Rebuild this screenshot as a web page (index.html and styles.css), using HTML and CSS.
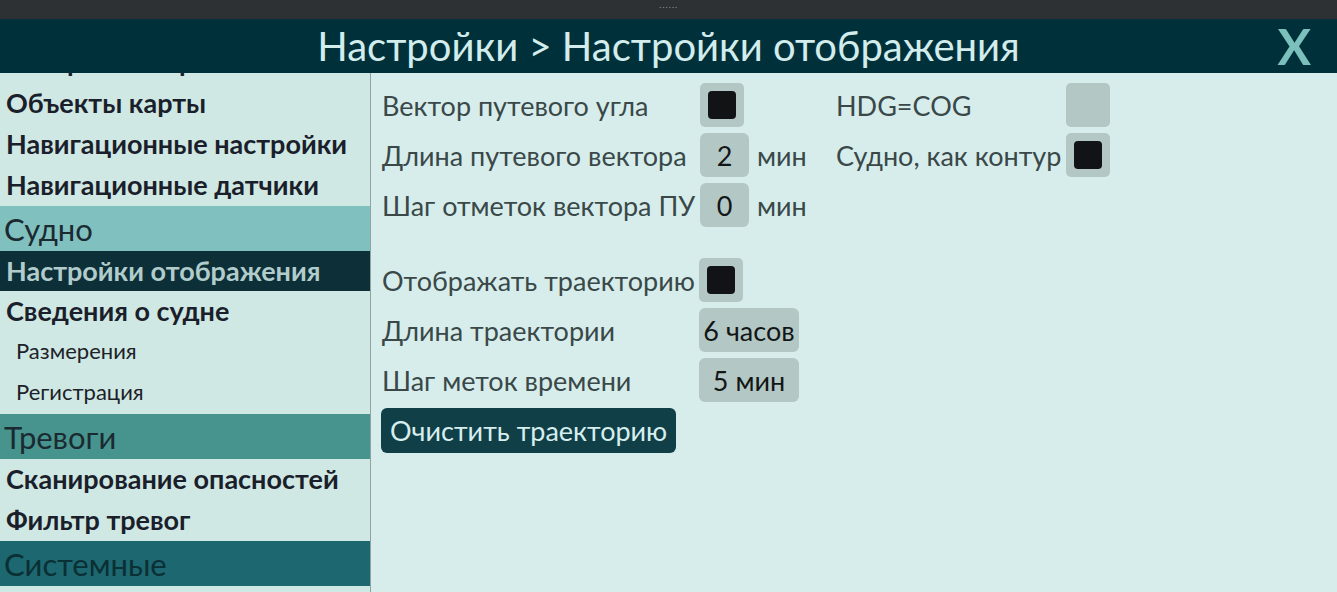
FILE: index.html
```html
<!DOCTYPE html>
<html lang="ru">
<head>
<meta charset="utf-8">
<title>Настройки</title>
<link rel="stylesheet" href="styles.css">
</head>
<body>
<div class="topbar"><span class="grip">......</span></div>
<header class="titlebar">
  <div class="spacer"></div>
  <h1 class="title">Настройки &gt; Настройки отображения</h1>
  <div class="close">X</div>
</header>
<div class="main">
  <nav class="sidebar">
    <div class="list">
      <div class="item">Настройки карты</div>
      <div class="item">Объекты карты</div>
      <div class="item">Навигационные настройки</div>
      <div class="item">Навигационные датчики</div>
      <div class="section sec-ship">Судно</div>
      <div class="item selected">Настройки отображения</div>
      <div class="item">Сведения о судне</div>
      <div class="item sub">Размерения</div>
      <div class="item sub">Регистрация</div>
      <div class="section sec-alarm">Тревоги</div>
      <div class="item">Сканирование опасностей</div>
      <div class="item">Фильтр тревог</div>
      <div class="section sec-sys">Системные</div>
    </div>
  </nav>
  <section class="content">
    <div class="col-left">
      <div class="group">
        <div class="label">Вектор путевого угла</div>
        <div class="check"><span class="mark"></span></div>
        <div class="unit"></div>
        <div class="label">Длина путевого вектора</div>
        <div class="value narrow">2</div>
        <div class="unit">мин</div>
        <div class="label">Шаг отметок вектора ПУ</div>
        <div class="value narrow">0</div>
        <div class="unit">мин</div>
      </div>
      <div class="group group2">
        <div class="label">Отображать траекторию</div>
        <div class="check"><span class="mark"></span></div>
        <div class="label">Длина траектории</div>
        <div class="value wide">6 часов</div>
        <div class="label">Шаг меток времени</div>
        <div class="value wide">5 мин</div>
      </div>
      <button class="btn">Очистить траекторию</button>
    </div>
    <div class="col-right">
      <div class="label">HDG=COG</div>
      <div class="check"></div>
      <div class="label">Судно, как контур</div>
      <div class="check"><span class="mark"></span></div>
    </div>
  </section>
</div>
</body>
</html>
```
FILE: styles.css
```css
* { box-sizing: border-box; }
html, body { margin: 0; padding: 0; }
body {
  width: 1337px;
  height: 592px;
  overflow: hidden;
  font-family: Lato, "Noto Sans", sans-serif;
  background: #d6edec;
  display: flex;
  flex-direction: column;
}
.topbar {
  height: 19px;
  background: #2e3134;
  display: flex;
  justify-content: center;
  align-items: flex-start;
}
.grip {
  font-family: "DejaVu Sans", sans-serif;
  font-size: 8px;
  color: #9aa0a4;
  letter-spacing: 0.6px;
  line-height: 12px;
}
.titlebar {
  height: 54px;
  background: #00313a;
  display: grid;
  grid-template-columns: 1fr auto 1fr;
  align-items: center;
}
.title {
  margin: 0;
  font-weight: 400;
  font-size: 40px;
  color: #d3ecec;
  line-height: 54px;
  white-space: nowrap;
}
.close {
  justify-self: end;
  margin-right: 26px;
  font-size: 50px;
  line-height: 54px;
  color: #7cc0bd;
  font-weight: 700;
}
.main {
  flex: 1;
  display: flex;
  min-height: 0;
}
.sidebar {
  width: 371px;
  flex: none;
  background: #d0e8e4;
  border-right: 1px solid #8fa3a3;
  overflow: hidden;
}
.list {
  margin-top: -31px;
}
.item {
  height: 41px;
  line-height: 40px;
  padding-left: 6px;
  font-weight: 700;
  font-size: 27px;
  color: #1a1f2b;
  white-space: nowrap;
}
.item.selected {
  height: 40px;
  line-height: 40px;
  background: #0c2f38;
  color: #b1cccb;
}
.item.sub {
  font-weight: 400;
  font-size: 22px;
  padding-left: 16px;
  line-height: 38px;
  color: #1c2228;
}
.section {
  height: 45px;
  line-height: 47px;
  padding-left: 4px;
  font-size: 31px;
  font-weight: 400;
  color: #1b2a30;
}
.sec-ship { background: #80c0bf; }
.sec-alarm { background: #47948f; }
.sec-sys { background: #1d6870; color: #0a2f34; }

.content {
  flex: 1;
  display: flex;
  padding: 10px 0 0 11px;
  color: #3a4848;
}
.col-left {
  width: 454px;
  display: flex;
  flex-direction: column;
  align-items: flex-start;
}
.group {
  display: grid;
  grid-template-columns: 318px auto auto;
  grid-auto-rows: 44px;
  row-gap: 6px;
  align-items: center;
}
.group2 {
  margin-top: 31px;
  grid-template-columns: 317px auto;
}
.label {
  font-size: 27px;
  white-space: nowrap;
  color: #3a4848;
}
.unit {
  font-size: 27px;
  padding-left: 8px;
  color: #3a4848;
}
.check {
  width: 44px;
  height: 44px;
  background: #b3c8c5;
  border-radius: 5px;
  display: flex;
  align-items: center;
  justify-content: center;
}
.mark {
  width: 28px;
  height: 28px;
  background: #111314;
  border-radius: 4px;
}
.value {
  height: 44px;
  background: #b3c8c5;
  border-radius: 6px;
  font-size: 27px;
  color: #131617;
  display: flex;
  align-items: center;
  justify-content: center;
}
.value.narrow { width: 49px; }
.value.wide { width: 100px; }
.btn {
  margin-top: 6px;
  margin-left: -1px;
  height: 45px;
  padding: 0 9px;
  background: #113f48;
  color: #d6eeee;
  border: none;
  border-radius: 6px;
  font-family: Lato, "Noto Sans", sans-serif;
  font-size: 27px;
}
.col-right {
  display: grid;
  grid-template-columns: 230px 44px;
  grid-auto-rows: 44px;
  row-gap: 6px;
  align-items: center;
  align-content: start;
}
```
